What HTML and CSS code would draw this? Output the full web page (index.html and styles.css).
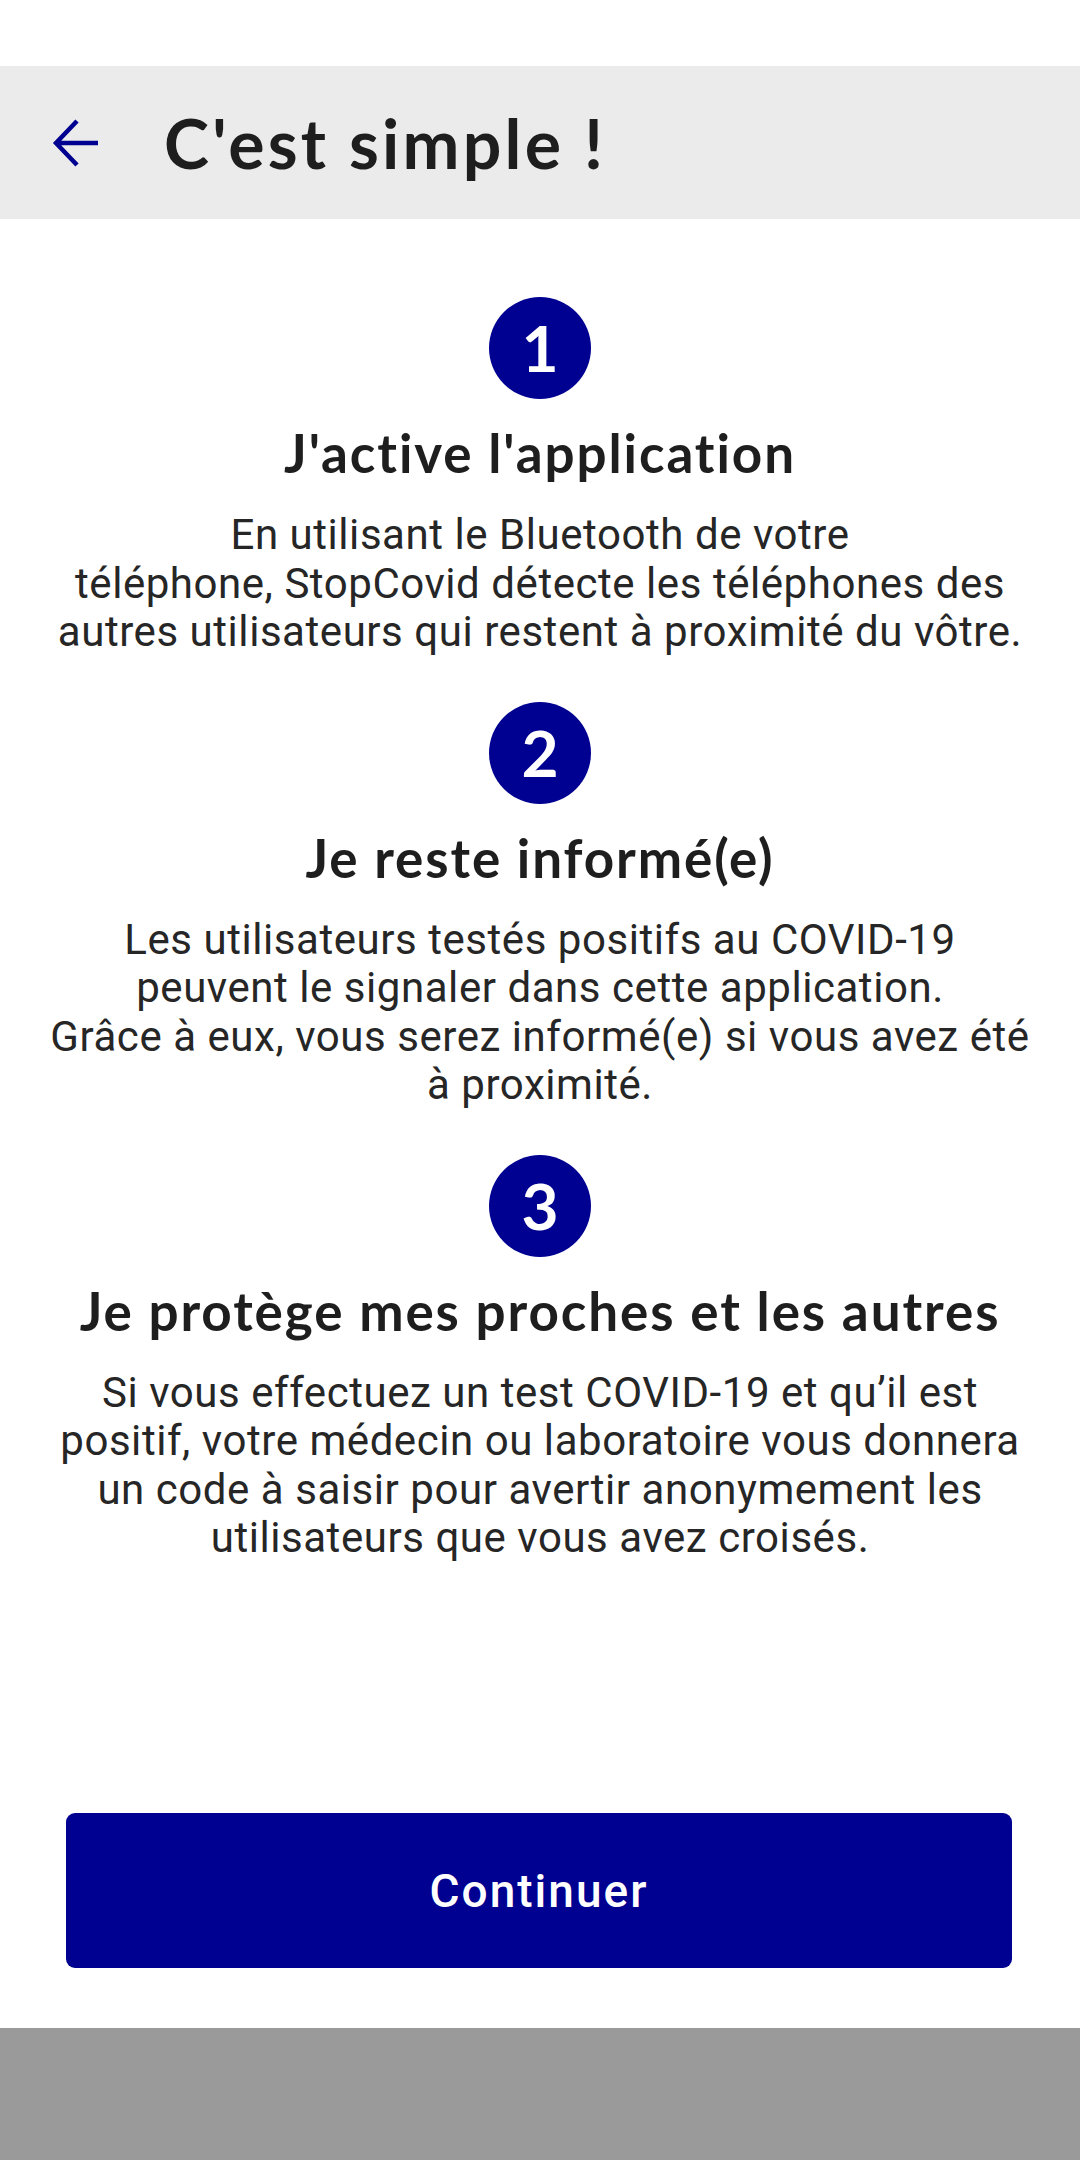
FILE: index.html
```html
<!DOCTYPE html>
<html lang="fr">
<head>
<meta charset="utf-8">
<title>C'est simple !</title>
<link rel="stylesheet" href="styles.css">
</head>
<body>
<div class="screen">
  <div class="statusbar"></div>
  <header class="appbar">
    <button class="back" aria-label="Retour">
      <svg width="48" height="48" viewBox="0 0 48 48" aria-hidden="true">
        <path d="M46 24H4M25 2L4 24l21 22" fill="none" stroke="#000091" stroke-width="4.5" stroke-linecap="butt" stroke-linejoin="miter"/>
      </svg>
    </button>
    <h1 class="title">C'est simple !</h1>
  </header>
  <main class="content">
    <section class="step">
      <div class="num">1</div>
      <h2 class="step-title">J'active l'application</h2>
      <p class="step-text">En utilisant le Bluetooth de votre<br>téléphone, StopCovid détecte les téléphones des<br>autres utilisateurs qui restent à proximité du vôtre.</p>
    </section>
    <section class="step">
      <div class="num">2</div>
      <h2 class="step-title">Je reste informé(e)</h2>
      <p class="step-text">Les utilisateurs testés positifs au COVID-19<br>peuvent le signaler dans cette application.<br>Grâce à eux, vous serez informé(e) si vous avez été<br>à proximité.</p>
    </section>
    <section class="step">
      <div class="num">3</div>
      <h2 class="step-title">Je protège mes proches et les autres</h2>
      <p class="step-text">Si vous effectuez un test COVID-19 et qu’il est<br>positif, votre médecin ou laboratoire vous donnera<br>un code à saisir pour avertir anonymement les<br>utilisateurs que vous avez croisés.</p>
    </section>
  </main>
  <div class="footer">
    <button class="primary">Continuer</button>
  </div>
  <div class="navbar"></div>
</div>
</body>
</html>
```

FILE: styles.css
```css
html, body {
  margin: 0;
  padding: 0;
  background: #ffffff;
}

.screen {
  width: 1080px;
  height: 2160px;
  display: flex;
  flex-direction: column;
  font-family: Roboto, "Liberation Sans", sans-serif;
  color: #212121;
}

.statusbar {
  height: 66px;
  background: #ffffff;
  flex: none;
}

.appbar {
  height: 153px;
  flex: none;
  background: #ebebeb;
  display: flex;
  align-items: center;
  padding-left: 52px;
  box-sizing: border-box;
}

.back {
  width: 48px;
  height: 48px;
  padding: 0;
  border: 0;
  background: transparent;
  display: flex;
  align-items: center;
  justify-content: center;
  margin-right: 64px;
}

.back svg {
  display: block;
}

.title {
  margin: 0;
  font-family: Lato, "Open Sans", sans-serif;
  font-weight: 700;
  font-size: 68px;
  line-height: 80px;
  color: #1e1e1e;
  letter-spacing: 3.2px;
}

.content {
  flex: 1;
  padding: 78px 20px 0;
  display: flex;
  flex-direction: column;
  align-items: center;
}

.step {
  display: flex;
  flex-direction: column;
  align-items: center;
  margin-bottom: 45px;
}

.num {
  width: 102px;
  height: 102px;
  border-radius: 50%;
  background: #000091;
  color: #ffffff;
  font-family: Lato, "Open Sans", sans-serif;
  font-weight: 700;
  font-size: 64px;
  line-height: 102px;
  text-align: center;
}

.step-title {
  margin: 23px 0 0;
  font-family: Lato, "Open Sans", sans-serif;
  font-weight: 700;
  font-size: 53px;
  line-height: 62px;
  color: #1e1e1e;
  text-align: center;
  letter-spacing: 1.9px;
}

.step-text {
  margin: 27px 0 0;
  font-family: Roboto, "Liberation Sans", sans-serif;
  font-size: 42px;
  line-height: 48.5px;
  color: #262626;
  text-align: center;
  letter-spacing: 0.55px;
  white-space: nowrap;
}

.footer {
  flex: none;
  padding: 0 68px 60px 66px;
}

.primary {
  display: block;
  width: 100%;
  height: 155px;
  border: 0;
  border-radius: 9px;
  background: #000091;
  color: #ffffff;
  font-family: Roboto, "Liberation Sans", sans-serif;
  font-weight: 500;
  font-size: 46px;
  letter-spacing: 2px;
}

.navbar {
  flex: none;
  height: 132px;
  background: #9a9a9a;
}
```
